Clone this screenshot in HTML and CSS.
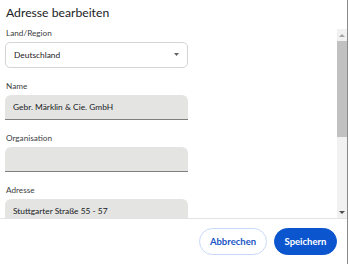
FILE: index.html
```html
<!DOCTYPE html>
<html lang="de">
<head>
<meta charset="utf-8">
<link rel="stylesheet" href="styles.css">
</head>
<body>
<div class="dialog">
  <div class="header">Adresse bearbeiten</div>
  <div class="body">
    <div class="content">
      <div class="field">
        <div class="label">Land/Region</div>
        <div class="select">
          <span>Deutschland</span>
          <svg class="caret" width="5" height="3" viewBox="0 0 5 3"><path d="M0 0h5L2.5 3z" fill="#5f6368"/></svg>
        </div>
      </div>
      <div class="field">
        <div class="label">Name</div>
        <div class="input">Gebr. Märklin &amp; Cie. GmbH</div>
      </div>
      <div class="field">
        <div class="label">Organisation</div>
        <div class="input"></div>
      </div>
      <div class="field">
        <div class="label">Adresse</div>
        <div class="input">Stuttgarter Straße 55 - 57</div>
      </div>
    </div>
    <div class="scrollbar">
      <div class="arrow up"><svg width="6" height="3" viewBox="0 0 6 3"><path d="M0 3h6L3 0z" fill="#a3a3a3"/></svg></div>
      <div class="track"><div class="thumb"></div></div>
      <div class="arrow down"><svg width="6" height="3" viewBox="0 0 6 3"><path d="M0 0h6L3 3z" fill="#505050"/></svg></div>
    </div>
  </div>
  <div class="footer">
    <button class="btn secondary">Abbrechen</button>
    <button class="btn primary">Speichern</button>
  </div>
</div>
</body>
</html>
```
FILE: styles.css
```css
* { box-sizing: border-box; }
html, body { margin: 0; padding: 0; background: #fff; }
body {
  width: 349px;
  height: 264px;
  overflow: hidden;
  font-family: "Lato", "Open Sans", sans-serif;
  color: #202124;
}
.dialog {
  width: 348px;
  height: 264px;
  border-right: 1px solid #8a8a8a;
  display: flex;
  flex-direction: column;
}
.header {
  height: 28px;
  padding: 4px 0 0 6px;
  font-size: 12.2px;
  line-height: 18px;
  color: #202124;
}
.body {
  height: 190px;
  display: flex;
  overflow: hidden;
}
.content {
  flex: 1;
  padding: 0 0 0 5px;
  overflow: hidden;
}
.field {
  width: 183px;
  margin-bottom: 13px;
}
.label {
  font-size: 8.2px;
  line-height: 11px;
  padding-left: 1px;
  margin-bottom: 3px;
  color: #3c4043;
}
.select {
  height: 26px;
  border: 1px solid #d4d4d4;
  border-radius: 5px;
  display: flex;
  align-items: center;
  justify-content: space-between;
  padding: 0 8px 0 8px;
  font-size: 8.4px;
  color: #202124;
}
.caret { margin-top: -1px; }
.input {
  height: 25px;
  background: #e4e5e3;
  border-radius: 6px 6px 0 0;
  border-bottom: 1px solid #7f7f7f;
  padding: 0 8px;
  font-size: 8.4px;
  line-height: 24px;
  color: #202124;
}
.scrollbar {
  width: 10px;
  margin-top: 1px;
  background: #f1f1f1;
  display: flex;
  flex-direction: column;
}
.arrow {
  height: 12px;
  display: flex;
  align-items: center;
  justify-content: center;
}
.track { flex: 1; }
.thumb {
  height: 96px;
  background: #c1c1c1;
}
.footer {
  flex: 1;
  border-top: 1px solid #e3e3e3;
  display: flex;
  justify-content: flex-end;
  align-items: center;
  gap: 7px;
  padding: 0 10px 0 0;
}
.btn {
  height: 27px;
  border-radius: 14px;
  font-family: "Lato", "Open Sans", sans-serif;
  font-size: 9.5px;
  font-weight: 700;
  padding: 0;
  cursor: pointer;
}
.secondary {
  width: 68px;
  background: #fff;
  border: 1px solid #c7d9f7;
  color: #1a56c4;
}
.primary {
  width: 63px;
  background: #0b55cf;
  border: 1px solid #0b55cf;
  color: #fff;
}
```
